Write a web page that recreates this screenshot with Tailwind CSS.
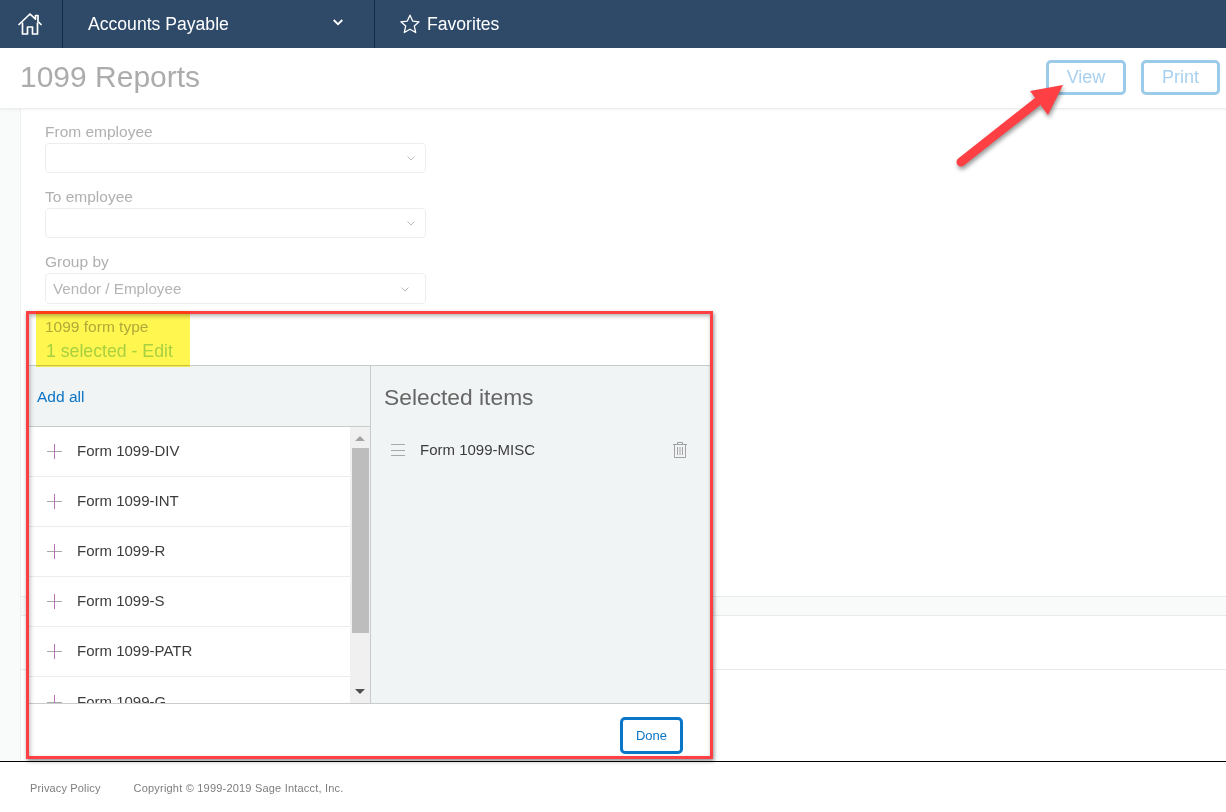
<!doctype html>
<html>
<head>
<meta charset="utf-8">
<title>1099 Reports</title>
<script src="https://cdn.jsdelivr.net/npm/@tailwindcss/browser@4"></script>
</head>
<body class="bg-white font-['Liberation_Sans',Arial,sans-serif]">
<div class="relative w-[1226px] h-[812px] overflow-hidden flex flex-col bg-white">
  <nav class="h-12 shrink-0 bg-[#2f4a69] flex text-white text-[17.600px]">
    <div class="w-[63px] border-r border-[#142c4a] flex items-center justify-center pr-[2px]">
      <svg class="w-6 h-6" viewBox="0 0 24 24" fill="none" stroke="white" stroke-width="1.7" stroke-linejoin="round" stroke-linecap="round"><path d="M1 12.5 12 2l5.5 5.2V3.5h2.5v6L23 12.500"/><path d="M4.500 11v11h5v-7h5v7h5V11"/></svg>
    </div>
    <div class="w-[312px] border-r border-[#142c4a] flex items-center justify-between pl-[25px] pr-[31px]">
      <span>Accounts Payable</span>
      <svg class="w-[10px] h-[7px] -mt-[4px]" viewBox="0 0 10 7" fill="none" stroke="white" stroke-width="1.800"><path d="M.7 1 5 5.200 9.300 1"/></svg>
    </div>
    <div class="flex items-center pl-[25px] gap-[7px]">
      <svg class="w-[20px] h-[20px] -mt-[1px]" viewBox="0 0 20 20" fill="none" stroke="white" stroke-width="1.300" stroke-linejoin="round"><path d="m10 1.200 2.700 5.900 6.400.7-4.800 4.300 1.400 6.400L10 15.200l-5.700 3.300 1.400-6.400L.9 7.800l6.400-.7z"/></svg>
      <span>Favorites</span>
    </div>
  </nav>

  <header class="h-[61px] shrink-0 flex items-center justify-between pl-[20px] pr-[6px] bg-white border-b border-[#eceeee] shadow-[0_1px_3px_rgba(0,0,0,0.05)] relative z-10">
    <h1 class="text-[30px] text-[#acacac] -mt-[4px]">1099 Reports</h1>
    <div class="flex gap-[15px] -mt-[2px]">
      <button class="w-[80px] h-[35px] pt-[1px] border-[3px] border-[#9bcbe9] rounded-[5px] text-[18px] text-[#a8d0ef]">View</button>
      <button class="w-[79px] h-[35px] pt-[1px] border-[3px] border-[#9bcbe9] rounded-[5px] text-[18px] text-[#a8d0ef]">Print</button>
    </div>
  </header>

  <div class="flex h-[652px] shrink-0">
    <div class="w-[21px] shrink-0 bg-[#f9fafa] border-r border-[#eef0f0]"></div>
    <main class="relative flex-1">
      <div class="absolute left-0 right-0 top-[487px] h-[20px] bg-[#f9fafa] border-y border-[#e9ebeb]"></div>
      <div class="absolute left-0 right-0 top-[560px] border-t border-[#e9ebeb]"></div>

      <form class="relative pt-[13px]">
        <div class="pl-[24px] h-[65px]">
          <label class="block h-[21px] leading-[20px] text-[15.500px] text-[#b0b0b0]">From employee</label>
          <div class="w-[381px] h-[30px] border border-[#eceeee] rounded-[4px] flex items-center justify-end pr-[10px]">
            <svg class="w-[8px] h-[5px]" viewBox="0 0 8 5" fill="none" stroke="#bdbdbd"><path d="M.5.500 4 4 7.500.500"/></svg>
          </div>
        </div>
        <div class="pl-[24px] h-[65px]">
          <label class="block h-[21px] leading-[20px] text-[15.500px] text-[#b0b0b0]">To employee</label>
          <div class="w-[381px] h-[30px] border border-[#eceeee] rounded-[4px] flex items-center justify-end pr-[10px]">
            <svg class="w-[8px] h-[5px]" viewBox="0 0 8 5" fill="none" stroke="#bdbdbd"><path d="M.5.500 4 4 7.500.500"/></svg>
          </div>
        </div>
        <div class="pl-[24px] h-[65px]">
          <label class="block h-[21px] leading-[20px] text-[15.500px] text-[#b0b0b0]">Group by</label>
          <div class="w-[381px] h-[31px] border border-[#eceeee] rounded-[4px] flex items-center justify-between pl-[7px] pr-[16px] pt-[1px] text-[15.200px] text-[#b4b4b4]">
            <span>Vendor / Employee</span>
            <svg class="w-[8px] h-[5px]" viewBox="0 0 8 5" fill="none" stroke="#bdbdbd"><path d="M.5.500 4 4 7.500.500"/></svg>
          </div>
        </div>
        <div class="pl-[24px] h-[48px]">
          <label class="block h-[22px] leading-[20px] text-[15.500px] text-[#b0b0b0]">1099 form type</label>
          <div class="ml-[1px] text-[17.700px] leading-[24px] text-[#a8d8c8]">1 selected - Edit</div>
        </div>

        <section class="ml-[7px] w-[682px] border-t border-[#c9cccc] bg-white">
          <div class="flex h-[338px] border-b border-[#c9cccc]">
            <div class="w-[343px] border-r border-[#c9cccc] flex flex-col">
              <div class="h-[61px] shrink-0 bg-[#f1f4f5] border-b border-[#c9cccc] flex items-center pl-[9px] pt-[1px] text-[15.500px] text-[#0b74c5]">Add all</div>
              <div class="flex-1 flex overflow-hidden">
                <ul class="w-[322px] h-[276px] overflow-hidden text-[15px] text-[#3c3c3c]">
                  <li class="h-[50px] border-b border-[#ececec] flex items-center pl-[19px] gap-[15px]">
                    <svg class="w-[15px] h-[15px]" viewBox="0 0 15 15"><path d="M0 7.500h15" stroke="#a8a8a8"/><path d="M7.500 0v15" stroke="#b673b3"/></svg><span>Form 1099-DIV</span>
                  </li>
                  <li class="h-[50px] border-b border-[#ececec] flex items-center pl-[19px] gap-[15px]">
                    <svg class="w-[15px] h-[15px]" viewBox="0 0 15 15"><path d="M0 7.500h15" stroke="#a8a8a8"/><path d="M7.500 0v15" stroke="#b673b3"/></svg><span>Form 1099-INT</span>
                  </li>
                  <li class="h-[50px] border-b border-[#ececec] flex items-center pl-[19px] gap-[15px]">
                    <svg class="w-[15px] h-[15px]" viewBox="0 0 15 15"><path d="M0 7.500h15" stroke="#a8a8a8"/><path d="M7.500 0v15" stroke="#b673b3"/></svg><span>Form 1099-R</span>
                  </li>
                  <li class="h-[50px] border-b border-[#ececec] flex items-center pl-[19px] gap-[15px]">
                    <svg class="w-[15px] h-[15px]" viewBox="0 0 15 15"><path d="M0 7.500h15" stroke="#a8a8a8"/><path d="M7.500 0v15" stroke="#b673b3"/></svg><span>Form 1099-S</span>
                  </li>
                  <li class="h-[50px] border-b border-[#ececec] flex items-center pl-[19px] gap-[15px]">
                    <svg class="w-[15px] h-[15px]" viewBox="0 0 15 15"><path d="M0 7.500h15" stroke="#a8a8a8"/><path d="M7.500 0v15" stroke="#b673b3"/></svg><span>Form 1099-PATR</span>
                  </li>
                  <li class="h-[50px] flex items-center pl-[19px] gap-[15px]">
                    <svg class="w-[15px] h-[15px]" viewBox="0 0 15 15"><path d="M0 7.500h15" stroke="#a8a8a8"/><path d="M7.500 0v15" stroke="#b673b3"/></svg><span>Form 1099-G</span>
                  </li>
                </ul>
                <div class="w-[20px] h-[276px] bg-[#f0f0f0] flex flex-col items-center">
                  <svg class="w-[10px] h-[5px] mt-[9px]" viewBox="0 0 10 5"><path d="M5 0l5 5H0z" fill="#a3a3a3"/></svg>
                  <div class="w-[17px] h-[185px] mt-[7px] bg-[#bdbdbd]"></div>
                  <svg class="w-[10px] h-[5px] mt-[56px]" viewBox="0 0 10 5"><path d="M0 0h10L5 5z" fill="#505050"/></svg>
                </div>
              </div>
            </div>
            <div class="flex-1 bg-[#f1f4f5]">
              <h2 class="pl-[13px] h-[62px] flex items-center text-[22.800px] text-[#666]">Selected items</h2>
              <div class="flex items-center h-[44px] pl-[20px] pr-[23px] text-[15px] text-[#3c3c3c]">
                <svg class="w-[14px] h-[12px] mr-[15px]" viewBox="0 0 14 12" stroke="#a8a8a8"><path d="M0 .5h14M0 6.500h14M0 11.500h14"/></svg>
                <span class="flex-1">Form 1099-MISC</span>
                <svg class="w-[14px] h-[16px]" viewBox="0 0 14 16" fill="none" stroke="#a2a2a2"><path d="M0 2.500h14M4.500 2.500V.5h5v2M1.500 2.500v13h11v-13M4.500 5v8M7 5v8M9.500 5v8"/></svg>
              </div>
            </div>
          </div>
          <div class="h-[53px] flex justify-end items-start pt-[13px] pr-[27px]">
            <button class="w-[63px] h-[37px] border-[3px] border-[#0a76c8] rounded-[5px] text-[13px] text-[#0b74c5]">Done</button>
          </div>
        </section>
      </form>
    </main>
  </div>

  <footer class="h-[51px] shrink-0 border-t border-black flex items-center pl-[30px] gap-[33px] text-[11px] text-[#7d7d7d] pt-[2px]">
    <span class="tracking-[0.15px]">Privacy Policy</span>
    <span class="tracking-[0.2px]">Copyright © 1999-2019 Sage Intacct, Inc.</span>
  </footer>

  <div class="absolute z-20 left-[26px] top-[311px] w-[687px] h-[448px] border-[3px] border-[#fe4044] shadow-[1px_2px_4px_rgba(0,0,0,0.45),inset_1px_2px_4px_rgba(0,0,0,0.3)]"></div>
  <div class="absolute z-20 left-[36px] top-[311px] w-[154px] h-[56px] bg-[#fff650] mix-blend-multiply"></div>
  <svg class="absolute z-20 left-[945px] top-[75px] w-[130px] h-[100px] drop-shadow-[1px_3px_2px_rgba(0,0,0,0.4)]" viewBox="0 0 130 100">
    <path d="M16 87 92 27" stroke="#fe4044" stroke-width="9" stroke-linecap="round"/>
    <path d="M118 10 85 16 103 40z" fill="#fe4044"/>
  </svg>
</div>
</body>
</html>
